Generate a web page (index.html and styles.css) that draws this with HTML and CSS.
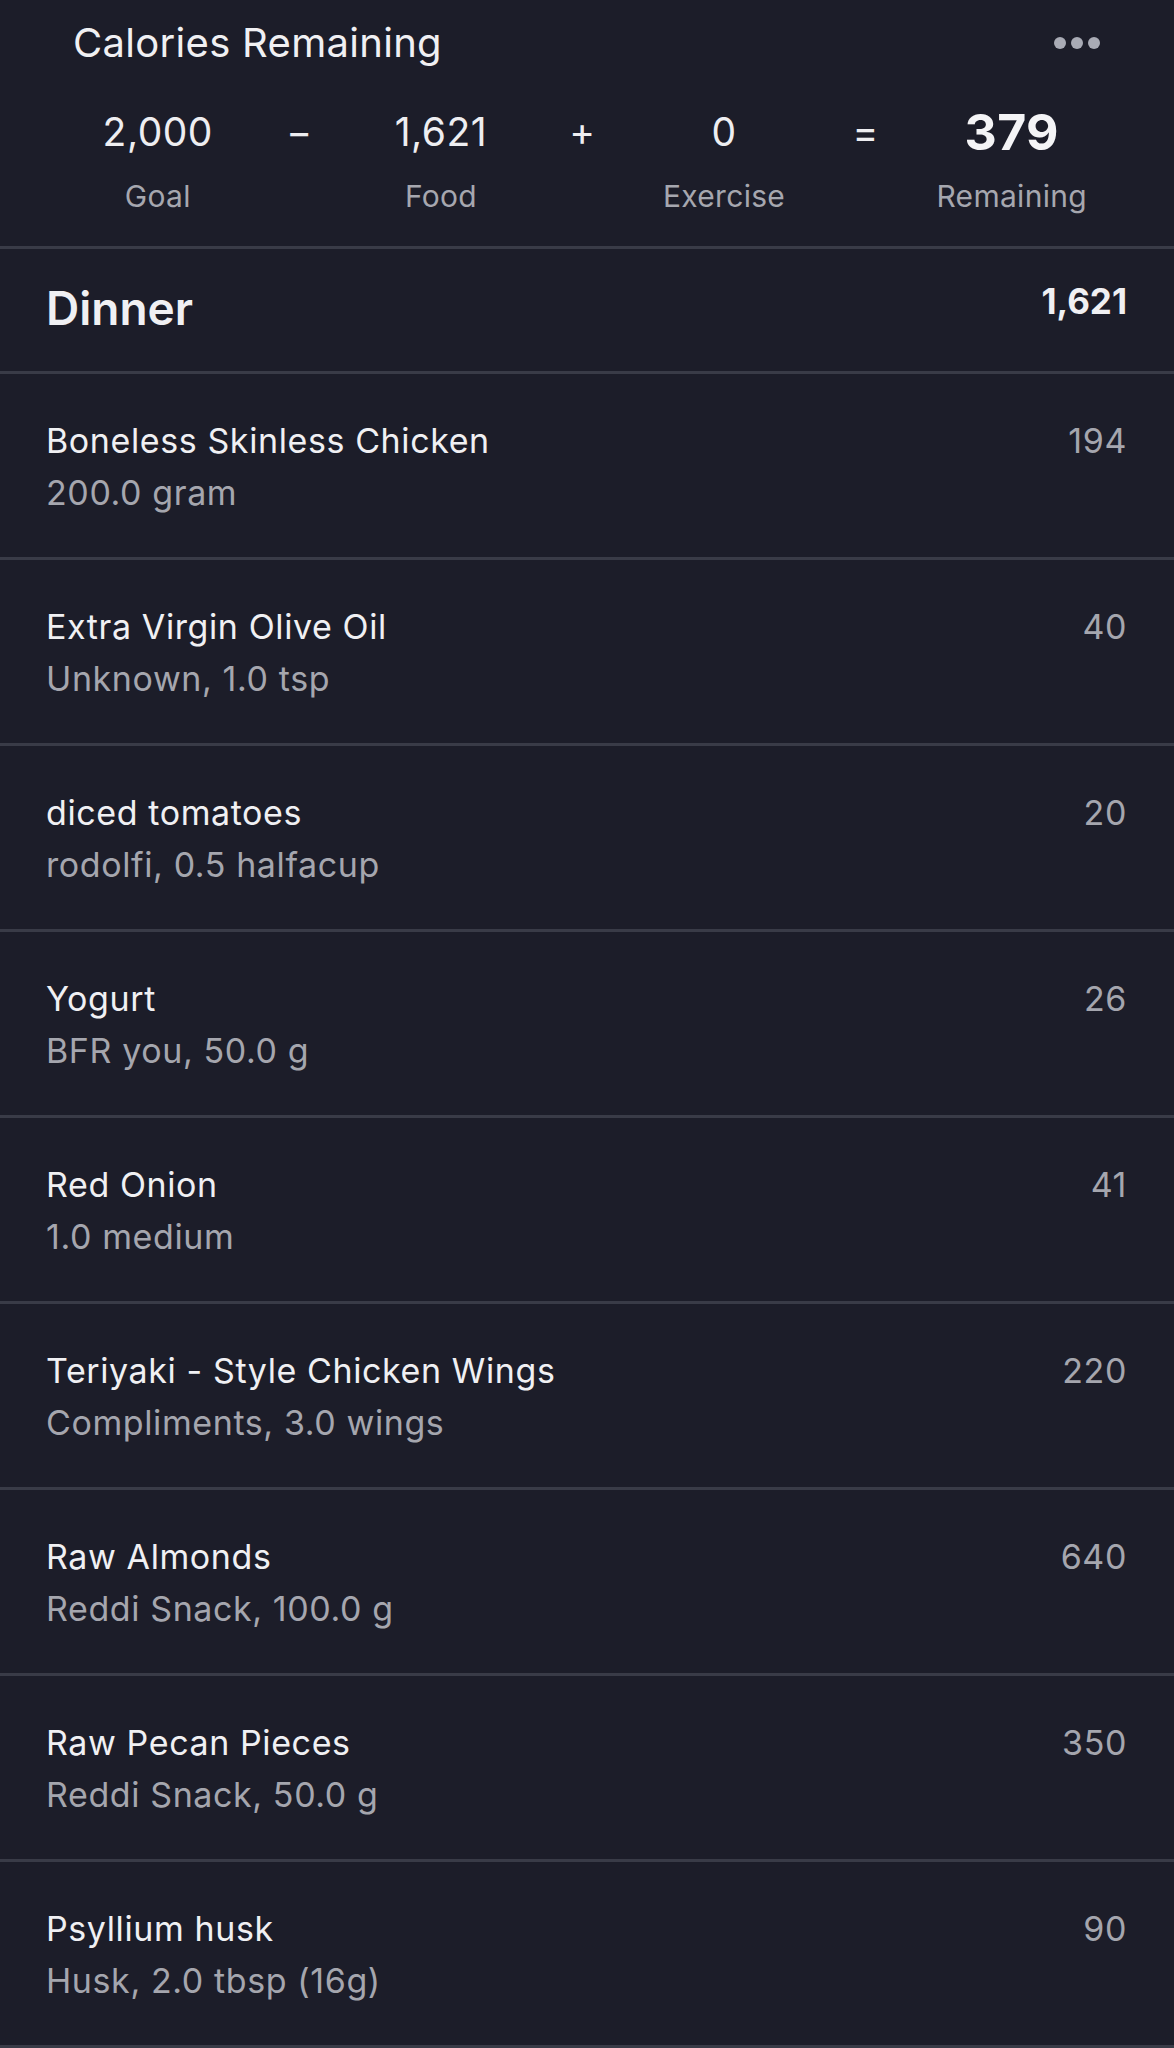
FILE: index.html
```html
<!DOCTYPE HTML>
<html lang="en">
  <head>
  <title>Diary</title>
  <meta charset="utf-8">
  <link rel="stylesheet" href="styles.css">
  </head>

  <body>

  <div id="summary">
    <div class="summaryTop">
      <span class="summaryTitle">Calories Remaining</span>
      <svg class="more" width="46" height="12" viewBox="0 0 46 12">
        <circle cx="6" cy="6" r="6"/>
        <circle cx="23" cy="6" r="6"/>
        <circle cx="40" cy="6" r="6"/>
      </svg>
    </div>
    <div class="equation">
      <div class="stat"><span class="value">2,000</span><span class="label">Goal</span></div>
      <div class="op">&minus;</div>
      <div class="stat"><span class="value">1,621</span><span class="label">Food</span></div>
      <div class="op">+</div>
      <div class="stat"><span class="value">0</span><span class="label">Exercise</span></div>
      <div class="op">=</div>
      <div class="stat"><span class="value total">379</span><span class="label">Remaining</span></div>
    </div>
  </div>

  <div class="meal">
    <span class="mealName">Dinner</span>
    <span class="mealTotal">1,621</span>
  </div>

  <div class="food">
    <div class="foodText">
      <div class="foodName">Boneless Skinless Chicken</div>
      <div class="foodInfo">200.0 gram</div>
    </div>
    <div class="foodCal">194</div>
  </div>

  <div class="food">
    <div class="foodText">
      <div class="foodName">Extra Virgin Olive Oil</div>
      <div class="foodInfo">Unknown, 1.0 tsp</div>
    </div>
    <div class="foodCal">40</div>
  </div>

  <div class="food">
    <div class="foodText">
      <div class="foodName">diced tomatoes</div>
      <div class="foodInfo">rodolfi, 0.5 halfacup</div>
    </div>
    <div class="foodCal">20</div>
  </div>

  <div class="food">
    <div class="foodText">
      <div class="foodName">Yogurt</div>
      <div class="foodInfo">BFR you, 50.0 g</div>
    </div>
    <div class="foodCal">26</div>
  </div>

  <div class="food">
    <div class="foodText">
      <div class="foodName">Red Onion</div>
      <div class="foodInfo">1.0 medium</div>
    </div>
    <div class="foodCal">41</div>
  </div>

  <div class="food">
    <div class="foodText">
      <div class="foodName">Teriyaki - Style Chicken Wings</div>
      <div class="foodInfo">Compliments, 3.0 wings</div>
    </div>
    <div class="foodCal">220</div>
  </div>

  <div class="food">
    <div class="foodText">
      <div class="foodName">Raw Almonds</div>
      <div class="foodInfo">Reddi Snack, 100.0 g</div>
    </div>
    <div class="foodCal">640</div>
  </div>

  <div class="food">
    <div class="foodText">
      <div class="foodName">Raw Pecan Pieces</div>
      <div class="foodInfo">Reddi Snack, 50.0 g</div>
    </div>
    <div class="foodCal">350</div>
  </div>

  <div class="food">
    <div class="foodText">
      <div class="foodName">Psyllium husk</div>
      <div class="foodInfo">Husk, 2.0 tbsp (16g)</div>
    </div>
    <div class="foodCal">90</div>
  </div>

  </body>

</html>
```

FILE: styles.css
```css
body {
  margin: 0;
  padding: 0;
  background: #1c1d29;
  color: #f0f0f3;
  font-family: Inter, "Noto Sans", sans-serif;
}

#summary {
  height: 249px;
  padding-top: 19px;
  box-sizing: border-box;
  border-bottom: 3px solid #393b47;
}

.summaryTop {
  display: flex;
  justify-content: space-between;
  align-items: center;
  padding: 0 74px 0 73px;
}

.summaryTitle {
  font-size: 40px;
  line-height: 48px;
  letter-spacing: 0.3px;
}

.more {
  display: block;
  fill: #a9abb5;
}

.equation {
  display: grid;
  grid-template-columns: repeat(7, 1fr);
  padding: 0 87px;
  margin-top: 42px;
  text-align: center;
}

.stat {
  display: flex;
  flex-direction: column;
  align-items: center;
}

.value, .op {
  font-size: 39px;
  line-height: 46px;
  letter-spacing: 0.5px;
  color: #eeeef1;
}

.value.total {
  font-size: 50px;
  font-weight: 700;
  letter-spacing: 0.3px;
  color: #f4f4f6;
}

.label {
  font-size: 30px;
  line-height: 36px;
  letter-spacing: 0.3px;
  margin-top: 23px;
  color: #a6a7af;
}

.meal {
  display: flex;
  justify-content: space-between;
  align-items: flex-start;
  height: 125px;
  padding: 31px 47px 0 46px;
  box-sizing: border-box;
  border-bottom: 3px solid #393b47;
}

.mealName {
  font-size: 46px;
  line-height: 56px;
  font-weight: 600;
}

.mealTotal {
  font-size: 35px;
  line-height: 42px;
  font-weight: 700;
}

.food {
  display: flex;
  justify-content: space-between;
  align-items: flex-start;
  height: 186px;
  padding: 41px 47px 0 46px;
  box-sizing: border-box;
  border-bottom: 3px solid #393b47;
  font-size: 34px;
  line-height: 52px;
  letter-spacing: 0.6px;
}

.foodName {
  color: #f0f0f3;
}

.foodInfo, .foodCal {
  color: #a5a6ae;
}
```
